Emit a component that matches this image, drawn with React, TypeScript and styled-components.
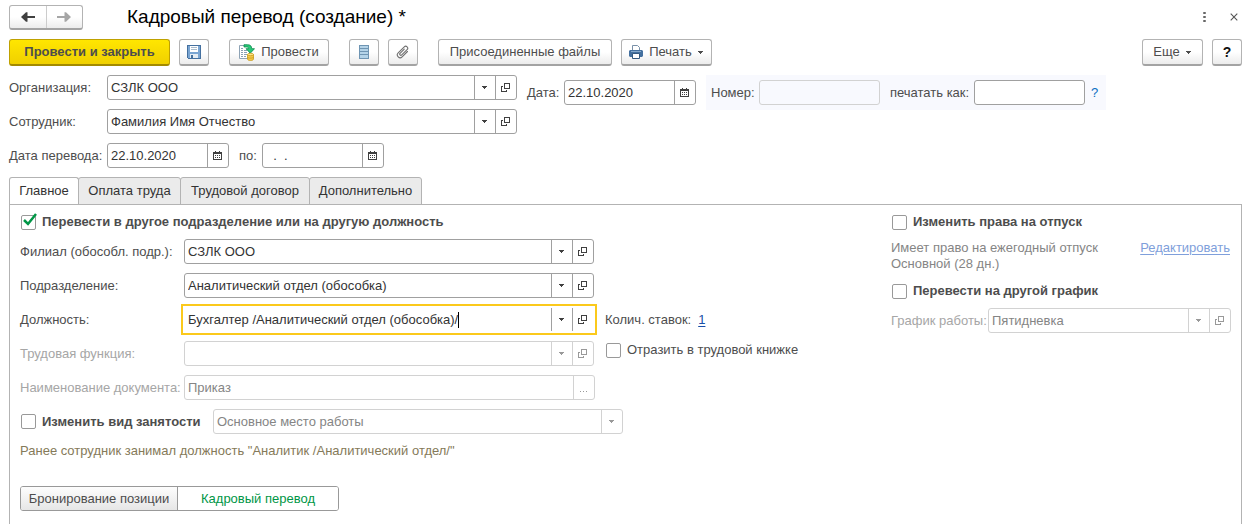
import React, { useState } from 'react';
import styled, { createGlobalStyle, css } from 'styled-components';

const GlobalStyle = createGlobalStyle`
  * { box-sizing: border-box; }
  html, body, #root { height: 100%; }
  body {
    margin: 0;
    background: #fff;
    color: #4d4d4d;
    font: 13px/16px "Liberation Sans", Arial, sans-serif;
    overflow: hidden;
  }
  button, input, select { font: inherit; color: inherit; margin: 0; }
`;

const Page = styled.main`
  min-height: 100%;
  display: flex;
  flex-direction: column;
  padding: 5px 14px 0 9px;
`;

const TitleBar = styled.header`
  display: flex;
  align-items: center;
  height: 24px;
  margin-bottom: 10px;
`;

const NavGroup = styled.div`
  display: flex;
  width: 74px;
  height: 25px;
  border: 1px solid #b3b3b3;
  border-bottom: 2px solid #a3a3a3;
  border-radius: 3px;
  background: linear-gradient(#fff 50%, #ececec);
`;

const NavButton = styled.button`
  flex: 1;
  display: grid;
  place-items: center;
  padding: 0;
  border: 0;
  background: none;
  & + & { border-left: 1px solid #ccc; }
`;

const Title = styled.h1`
  flex: 1;
  margin: 0 0 0 44px;
  font-size: 19px;
  line-height: 24px;
  font-weight: 400;
  color: #000;
`;

const WindowButton = styled.button`
  display: grid;
  place-items: center;
  width: 16px;
  height: 16px;
  padding: 0;
  margin-left: 14px;
  border: 0;
  background: none;
`;

const Toolbar = styled.div`
  display: flex;
  align-items: center;
  gap: 9px;
  margin-bottom: 9px;
`;

const ToolGroup = styled.div<{ $end?: boolean }>`
  display: flex;
  gap: 9px;
  margin-right: 11px;
  ${(p) => p.$end && css`margin: 0 0 0 auto;`}
`;

const ToolButton = styled.button<{ $width: number; $primary?: boolean }>`
  display: flex;
  align-items: center;
  justify-content: center;
  gap: 6px;
  width: ${(p) => p.$width}px;
  height: 27px;
  padding: 0;
  border: 1px solid #b3b3b3;
  border-bottom: 2px solid #a3a3a3;
  border-radius: 3px;
  background: linear-gradient(#fff 50%, #ececec);
  white-space: nowrap;
  ${(p) => p.$primary && css`
    border-color: #bfa100 #bfa100 #a38a00;
    background: linear-gradient(#ffe600, #f0d000);
    font-weight: 700;
  `}
`;

const HelpMark = styled.span`
  font-size: 14px;
  font-weight: 700;
  color: #111;
`;

const TopForm = styled.div`
  display: grid;
  grid-template-columns: auto 1fr;
  column-gap: 10px;
  margin-bottom: 9px;
`;

const Stack = styled.div`
  display: flex;
  flex-direction: column;
  gap: 9px;
`;

const Row = styled.div`
  display: flex;
  align-items: center;
  gap: 10px;
  height: 25px;
`;

const Labelled = styled.div`
  display: flex;
  align-items: center;
`;

const Label = styled.label<{ $width: number; $muted?: boolean }>`
  flex: none;
  width: ${(p) => p.$width}px;
  white-space: nowrap;
  color: ${(p) => (p.$muted ? '#a6a6a6' : 'inherit')};
`;

const Field = styled.div<{ $width: number; $muted?: boolean; $active?: boolean; $clear?: boolean }>`
  --line: ${(p) => (p.$muted ? '#d2d2d2' : '#a0a0a0')};
  display: flex;
  flex: none;
  width: ${(p) => p.$width}px;
  height: 25px;
  border: 1px solid var(--line);
  border-radius: 3px;
  overflow: hidden;
  background: ${(p) => (p.$clear ? 'none' : '#fff')};
  color: ${(p) => (p.$muted ? '#858585' : '#333')};
  ${(p) => p.$active && css`
    border-color: transparent;
    border-radius: 0;
    outline: 2px solid #fbc91b;
    outline-offset: 1px;
  `}
`;

const TextInput = styled.input<{ $hug?: boolean }>`
  flex: 1;
  min-width: 0;
  width: 0;
  padding: 0 3px;
  border: 0;
  outline: 0;
  background: transparent;
  ${(p) => p.$hug && css`
    flex: none;
    width: auto;
    padding-right: 0;
    field-sizing: content;
    caret-color: transparent;
  `}
`;

const Caret = styled.span`
  width: 1px;
  height: 16px;
  margin: 4px auto 0 0;
  background: #000;
`;

const Choice = styled.select`
  appearance: none;
  flex: 1;
  padding: 0 3px;
  border: 0;
  background: transparent;
  opacity: 1;
`;

const FieldButton = styled.button`
  flex: none;
  display: grid;
  place-items: center;
  width: 21px;
  padding: 0;
  border: 0;
  border-left: 1px solid var(--line);
  background: none;
  color: #404040;
  &:disabled { color: #999; }
`;

const FieldMark = styled.span`
  display: grid;
  place-items: center;
  width: 21px;
  border-left: 1px solid var(--line);
  color: #999;
`;

const DateBlock = styled.div`
  display: flex;
  align-self: start;
  align-items: center;
  gap: 10px;
  height: 35px;
`;

const NumberPanel = styled.div`
  display: flex;
  align-items: center;
  gap: 10px;
  height: 35px;
  padding: 0 8px 0 5px;
  background: #f8f9fe;
`;

const HintButton = styled.button`
  padding: 0;
  margin-left: 6px;
  border: 0;
  background: none;
  color: #0a6fc2;
`;

const Tabs = styled.div`
  display: flex;
  height: 28px;
  margin-bottom: -1px;
`;

const Tab = styled.button<{ $width: number; $active: boolean }>`
  width: ${(p) => p.$width}px;
  margin-right: -1px;
  padding: 0;
  border: 1px solid #b3b3b3;
  border-bottom-color: ${(p) => (p.$active ? '#fff' : '#b3b3b3')};
  border-radius: 3px 3px 0 0;
  background: ${(p) => (p.$active ? '#fff' : '#ebebeb')};
  color: #333;
  white-space: nowrap;
`;

const Panel = styled.section`
  flex: 1;
  display: grid;
  grid-template-columns: 1fr 340px;
  padding: 9px 10px 12px;
  border: 1px solid #b3b3b3;
  border-bottom: 0;
`;

const Column = styled.div`
  display: flex;
  flex-direction: column;
`;

const CheckRow = styled.label<{ $bold?: boolean }>`
  display: flex;
  align-items: center;
  gap: 6px;
  height: 16px;
  padding-left: 1px;
  white-space: nowrap;
  font-weight: ${(p) => (p.$bold ? 700 : 400)};
`;

const CheckBox = styled.span`
  position: relative;
  display: block;
  width: 15px;
  height: 15px;
  input {
    appearance: none;
    display: block;
    width: 15px;
    height: 15px;
    border: 1px solid #999;
    border-radius: 2px;
    background: #fff;
  }
  svg {
    position: absolute;
    left: 2px;
    top: -2px;
    pointer-events: none;
  }
  input:not(:checked) + svg { display: none; }
`;

const Fields = styled(Stack)`
  margin: 9px 0;
`;

const FieldsWithAside = styled.div`
  display: flex;
  align-items: flex-end;
  gap: 10px;
`;

const Aside = styled.div`
  display: flex;
  flex-direction: column;
  gap: 14px;
  margin-bottom: 51px;
`;

const Rate = styled.div`
  display: flex;
  gap: 7px;
`;

const Link = styled.a<{ $muted?: boolean }>`
  color: ${(p) => (p.$muted ? '#7f9fdb' : '#1a4fa8')};
  text-decoration: underline;
  text-underline-offset: 2px;
`;

const Note = styled.p`
  margin: 9px 0 27px;
  color: #857a59;
`;

const Switch = styled.div`
  display: flex;
  width: 319px;
  height: 25px;
  border: 1px solid #999;
  border-radius: 3px;
  overflow: hidden;
`;

const SwitchButton = styled.button<{ $on: boolean }>`
  flex: 1;
  padding: 0;
  border: 0;
  background: ${(p) => (p.$on ? '#fff' : 'linear-gradient(#fdfdfd, #e6e6e6)')};
  color: ${(p) => (p.$on ? '#009646' : '#4d4d4d')};
  &:first-child { flex: none; width: 156px; }
  & + & { border-left: 1px solid #999; }
`;

const Employment = styled.div`
  width: 183px;
`;

const Vacation = styled.div`
  display: flex;
  justify-content: space-between;
  margin: 10px 1px 11px 0;
  color: #858585;
  p { margin: 0; }
`;

const Triangle = () => (
  <svg width="6" height="3" viewBox="0 0 6 3" fill="currentColor" shapeRendering="crispEdges" aria-hidden>
    <path d="M0 0h5v1H0zM1 1h3v1H1zM2 2h1v1H2z" />
  </svg>
);
const OpenIcon = () => (
  <svg width="10" height="9" viewBox="0 0 10 9" fill="currentColor" shapeRendering="crispEdges" aria-hidden>
    <path d="M3 0h6v6H3zM4 1v4h4V1z" fillRule="evenodd" />
    <path d="M0 3h2v1H1v4h4V7h1v2H0z" />
  </svg>
);
const CalendarIcon = () => (
  <svg width="10" height="9" viewBox="0 0 10 9" shapeRendering="crispEdges" aria-hidden>
    <path d="M0 1h2V0h1v1h3V0h1v1h2v8H0z" fill="#404040" />
    <path d="M1 3h7v5H1z" fill="#fff" />
    <path d="M2 4h1v1H2zM4 4h1v1H4zM6 4h1v1H6zM2 6h1v1H2zM4 6h1v1H4zM6 6h1v1H6z" fill="#404040" />
  </svg>
);
const Arrow = ({ back }: { back?: boolean }) => (
  <svg width="14" height="10" viewBox="0 0 14 10" fill={back ? '#404040' : '#a6a6a6'} aria-hidden>
    {back ? (
      <path d="M0 5L5 .2h1.500V3.900H14v2.200H6.500v3.700H5z" />
    ) : (
      <path d="M14 5L9 .2H7.500v3.700H0v2.200h7.500v3.700H9z" />
    )}
  </svg>
);
const DotsIcon = () => (
  <svg width="4" height="12" viewBox="0 0 4 12" fill="#666" aria-hidden>
    <rect x="1" y="1" width="3" height="2" rx="1" /><rect x="1" y="5" width="3" height="2" rx="1" /><rect x="1" y="9" width="3" height="2" rx="1" />
  </svg>
);
const CloseIcon = () => (
  <svg width="8" height="8" viewBox="0 0 8 8" stroke="#555" strokeWidth="1.1" aria-hidden><path d="M.7 .7l6.600 6.600M7.300 .7L.7 7.300" /></svg>
);
const SaveIcon = () => (
  <svg width="14" height="14" viewBox="0 0 14 14" shapeRendering="crispEdges" aria-hidden>
    <path d="M0 0h14v14H1l-1-1z" fill="#44709f" />
    <path d="M1 1h12v12H1z" fill="#7aa5d2" />
    <path d="M3 1h8v6H3z" fill="#fff" />
    <path d="M4 2h6v1H4zM4 4h6v1H4z" fill="#a9bccd" />
    <path d="M3 9h8v4H3z" fill="#e4ecf3" />
    <path d="M4 10h2v3H4z" fill="#44709f" />
  </svg>
);
const PostIcon = () => (
  <svg width="16" height="17" viewBox="0 0 16 17" aria-hidden>
    <path d="M.5 1.500h10v13H.5z" fill="#fff" stroke="#8ea3b5" />
    <path d="M2 4.500h2M2 6.500h2M2 8.500h2M2 10.500h2M2 12.500h2M5 6.500h3M5 8.500h3M5 10.500h3M5 12.500h2" stroke="#8aa0b3" />
    <path d="M5 .7h3.500c3 0 4.200 1.500 4.200 4h2.800L11.300 9.200 7 4.700h2.600c0-1.300-.8-1.700-2-1.700H5z" fill="#27c878" stroke="#0e8a4c" strokeWidth=".8" />
    <path d="M8.500 10.500V15c0 2 6 2 6 0v-4.500z" fill="#f4c94a" stroke="#c69a1c" strokeWidth=".8" />
    <path d="M8.500 13c0 1.500 6 1.500 6 0" fill="none" stroke="#c69a1c" strokeWidth=".8" />
    <ellipse cx="11.500" cy="10.500" rx="3" ry="1.200" fill="#ffe48a" stroke="#c69a1c" strokeWidth=".8" />
  </svg>
);
const ListIcon = () => (
  <svg width="10" height="14" viewBox="0 0 10 14" shapeRendering="crispEdges" aria-hidden>
    <path d="M0 0h10v14H0z" fill="#6f95b3" />
    <path d="M1 1h8v2H1zM1 4h8v2H1zM1 7h8v2H1zM1 10h8v3H1z" fill="#b4d3e8" />
  </svg>
);
const ClipIcon = () => (
  <svg width="14" height="14" viewBox="0 0 14 14" fill="none" stroke="#707070" strokeWidth="1.100" strokeLinecap="round" aria-hidden>
    <path transform="rotate(45 7 7)" d="M9.800 3.500V11a2.800 2.800 0 0 1-5.600 0V2.400a2 2 0 0 1 4 0V10a1.200 1.200 0 0 1-2.400 0V4" />
  </svg>
);
const PrintIcon = () => (
  <svg width="14" height="15" viewBox="0 0 14 15" aria-hidden>
    <path d="M3.500 6V.5h5l2 2V6" fill="#fff" stroke="#7890a8" />
    <path d="M1 5h12l1 1v5l-1 1H1l-1-1V6z" fill="#44709f" />
    <path d="M2 6.500h10" stroke="#86a9cb" />
    <path d="M3.500 8.500h7v5h-7z" fill="#fff" stroke="#35597f" />
  </svg>
);
const CheckMark = () => (
  <svg width="14" height="14" viewBox="0 0 14 14" fill="none" stroke="#009646" strokeWidth="2.500" aria-hidden><path d="M1 7l4 4 8-10" /></svg>
);
const MoreIcon = () => (
  <svg width="8" height="9" viewBox="0 0 8 9" fill="currentColor" shapeRendering="crispEdges" aria-hidden>
    <path d="M0 8h1v1H0zM3 8h1v1H3zM6 8h1v1H6z" />
  </svg>
);

type BoxProps = {
  id: string;
  label: string;
  labelWidth: number;
  width: number;
  value?: string;
  muted?: boolean;
  active?: boolean;
  readOnly?: boolean;
  kind?: 'ref' | 'date' | 'more' | 'plain';
};

const InputBox = ({ id, label, labelWidth, width, value = '', muted, active, readOnly, kind = 'ref' }: BoxProps) => {
  const [text, setText] = useState(value);
  return (
    <Labelled>
      <Label htmlFor={id} $width={labelWidth} $muted={muted}>{label}</Label>
      <Field $width={width} $muted={muted || readOnly} $clear={readOnly} $active={active}>
        <TextInput id={id} value={text} disabled={muted} readOnly={readOnly} $hug={active} onChange={(e) => setText(e.target.value)} />
        {active && <Caret />}
        {kind === 'ref' && (
          <>
            <FieldButton disabled={muted} aria-label="Выбрать"><Triangle /></FieldButton>
            <FieldButton disabled={muted} aria-label="Открыть"><OpenIcon /></FieldButton>
          </>
        )}
        {kind === 'date' && <FieldButton aria-label="Календарь"><CalendarIcon /></FieldButton>}
        {kind === 'more' && <FieldButton disabled={muted} aria-label="Изменить"><MoreIcon /></FieldButton>}
      </Field>
    </Labelled>
  );
};

const Check = ({ label, bold, checked }: { label: string; bold?: boolean; checked?: boolean }) => (
  <CheckRow $bold={bold}>
    <CheckBox><input type="checkbox" defaultChecked={checked} /><CheckMark /></CheckBox>
    {label}
  </CheckRow>
);

const TABS = [
  { name: 'Главное', width: 70 },
  { name: 'Оплата труда', width: 103 },
  { name: 'Трудовой договор', width: 130 },
  { name: 'Дополнительно', width: 113 },
];

export default function App() {
  const [tab, setTab] = useState(0);
  const [mode, setMode] = useState(1);
  return (
    <Page>
      <GlobalStyle />
      <TitleBar>
        <NavGroup>
          <NavButton aria-label="Назад"><Arrow back /></NavButton>
          <NavButton aria-label="Вперед"><Arrow /></NavButton>
        </NavGroup>
        <Title>Кадровый перевод (создание) *</Title>
        <WindowButton aria-label="Меню"><DotsIcon /></WindowButton>
        <WindowButton aria-label="Закрыть"><CloseIcon /></WindowButton>
      </TitleBar>

      <Toolbar>
        <ToolGroup>
          <ToolButton $width={161} $primary>Провести и закрыть</ToolButton>
          <ToolButton $width={30} aria-label="Записать"><SaveIcon /></ToolButton>
        </ToolGroup>
        <ToolGroup>
          <ToolButton $width={100}><PostIcon />Провести</ToolButton>
        </ToolGroup>
        <ToolGroup>
          <ToolButton $width={30} aria-label="Список"><ListIcon /></ToolButton>
          <ToolButton $width={30} aria-label="Вложения"><ClipIcon /></ToolButton>
        </ToolGroup>
        <ToolGroup>
          <ToolButton $width={174}>Присоединенные файлы</ToolButton>
          <ToolButton $width={91}><PrintIcon />Печать<Triangle /></ToolButton>
        </ToolGroup>
        <ToolGroup $end>
          <ToolButton $width={61}>Еще<Triangle /></ToolButton>
          <ToolButton $width={30} aria-label="Справка"><HelpMark>?</HelpMark></ToolButton>
        </ToolGroup>
      </Toolbar>

      <TopForm>
        <Stack>
          <Row><InputBox id="org" label="Организация:" labelWidth={98} width={410} value="СЗЛК ООО" /></Row>
          <Row><InputBox id="person" label="Сотрудник:" labelWidth={98} width={410} value="Фамилия Имя Отчество" /></Row>
          <Row>
            <InputBox id="from" label="Дата перевода:" labelWidth={98} width={122} value="22.10.2020" kind="date" />
            <InputBox id="to" label="по:" labelWidth={23} width={122} value="  .  ." kind="date" />
          </Row>
        </Stack>
        <DateBlock>
          <InputBox id="date" label="Дата:" labelWidth={37} width={132} value="22.10.2020" kind="date" />
          <NumberPanel>
            <InputBox id="number" label="Номер:" labelWidth={48} width={121} readOnly kind="plain" />
            <Labelled>
              <InputBox id="printAs" label="печатать как:" labelWidth={84} width={111} kind="plain" />
              <HintButton>?</HintButton>
            </Labelled>
          </NumberPanel>
        </DateBlock>
      </TopForm>

      <Tabs role="tablist">
        {TABS.map((t, i) => (
          <Tab key={t.name} role="tab" aria-selected={tab === i} $active={tab === i} $width={t.width} onClick={() => setTab(i)}>
            {t.name}
          </Tab>
        ))}
      </Tabs>
      <Panel>
        <Column>
          <Check bold checked label="Перевести в другое подразделение или на другую должность" />
          <FieldsWithAside>
            <Fields>
              <Row><InputBox id="branch" label="Филиал (обособл. подр.):" labelWidth={164} width={410} value="СЗЛК ООО" /></Row>
              <Row><InputBox id="dept" label="Подразделение:" labelWidth={164} width={410} value="Аналитический отдел (обособка)" /></Row>
              <Row><InputBox id="post" label="Должность:" labelWidth={164} width={410} value="Бухгалтер /Аналитический отдел (обособка)/" active /></Row>
              <Row><InputBox id="func" label="Трудовая функция:" labelWidth={164} width={410} muted /></Row>
              <Row><InputBox id="doc" label="Наименование документа:" labelWidth={164} width={411} value="Приказ" muted kind="more" /></Row>
            </Fields>
            <Aside>
              <Rate>Колич. ставок: <Link href="#rate">1</Link></Rate>
              <Check label="Отразить в трудовой книжке" />
            </Aside>
          </FieldsWithAside>
          <Row>
            <Employment><Check bold label="Изменить вид занятости" /></Employment>
            <Field $width={410} $muted>
              <Choice disabled aria-label="Вид занятости"><option>Основное место работы</option></Choice>
              <FieldMark><Triangle /></FieldMark>
            </Field>
          </Row>
          <Note>Ранее сотрудник занимал должность "Аналитик /Аналитический отдел/"</Note>
          <Switch>
            {['Бронирование позиции', 'Кадровый перевод'].map((name, i) => (
              <SwitchButton key={name} $on={mode === i} aria-pressed={mode === i} onClick={() => setMode(i)}>{name}</SwitchButton>
            ))}
          </Switch>
        </Column>
        <Column>
          <Check bold label="Изменить права на отпуск" />
          <Vacation>
            <p>Имеет право на ежегодный отпуск<br />Основной (28 дн.)</p>
            <Link href="#edit" $muted>Редактировать</Link>
          </Vacation>
          <Check bold label="Перевести на другой график" />
          <Fields>
            <Row><InputBox id="schedule" label="График работы:" labelWidth={97} width={243} value="Пятидневка" muted /></Row>
          </Fields>
        </Column>
      </Panel>
    </Page>
  );
}
